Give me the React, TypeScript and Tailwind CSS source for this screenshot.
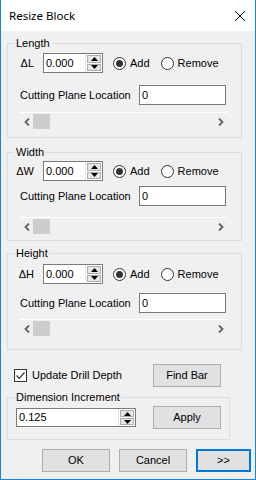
function UpDown() {
  return (
    <div className="flex h-full w-[17px] flex-col gap-px border-l border-[#e3e3e3] p-px">
      <div className="flex flex-1 items-center justify-center border border-[#adadad] bg-[#e6e6e6]">
        <svg width="7" height="4" viewBox="0 0 7 4">
          <path d="M3.5 0 7 4H0z" fill="#000" />
        </svg>
      </div>
      <div className="flex flex-1 items-center justify-center border border-[#adadad] bg-[#e6e6e6]">
        <svg width="7" height="4" viewBox="0 0 7 4">
          <path d="M0 0h7L3.5 4z" fill="#000" />
        </svg>
      </div>
    </div>
  );
}

function Radio({ checked, label }: { checked?: boolean; label: string }) {
  return (
    <div className="flex items-center">
      <span className="flex h-[13px] w-[13px] items-center justify-center rounded-full border border-[#333] bg-white">
        {checked && <span className="h-[7px] w-[7px] rounded-full bg-[#333]" />}
      </span>
      <span className="ml-[4px]">{label}</span>
    </div>
  );
}

function Chevron({ dir }: { dir: "l" | "r" }) {
  return (
    <svg width="6" height="8" viewBox="0 0 6 8">
      <path
        d={dir === "l" ? "M5 0.5 1.5 4 5 7.5" : "M1 0.5 4.5 4 1 7.5"}
        fill="none"
        stroke="#606060"
        strokeWidth="1.8"
      />
    </svg>
  );
}

interface GroupProps {
  label: string;
  delta: string;
  mt: string;
  r1: string;
  r2: string;
  r3: string;
  pb: string;
}

function ResizeGroup({ label, delta, mt, r1, r2, r3, pb }: GroupProps) {
  return (
    <div className={`ml-[6px] w-[235px] border border-[#dcdcdc] ${mt} ${pb}`}>
      <div className="-mt-[7px] ml-[6px] w-fit bg-[#f0f0f0] px-[2px] leading-[13px]">{label}</div>

      {/* delta row */}
      <div className={`flex h-[20px] items-center ${r1}`}>
        <div className="w-[26px] text-right">{delta}</div>
        <div className="ml-[9px] flex h-[20px] w-[60px] border border-[#7a7a7a] bg-white">
          <span className="flex-1 pl-[2px] leading-[18px]">0.000</span>
          <UpDown />
        </div>
        <div className="ml-[10px]">
          <Radio checked label="Add" />
        </div>
        <div className="ml-[11px]">
          <Radio label="Remove" />
        </div>
      </div>

      {/* cutting plane */}
      <div className={`flex h-[20px] items-center pl-[12px] ${r2}`}>
        <span className="w-[119px]">Cutting Plane Location</span>
        <div className="h-[20px] w-[87px] border border-[#7a7a7a] bg-white pl-[2px] leading-[18px]">0</div>
      </div>

      {/* scrollbar */}
      <div className={`ml-[12px] flex h-[18px] w-[207px] items-center border-t border-white ${r3}`}>
        <div className="flex w-[13px] justify-center">
          <Chevron dir="l" />
        </div>
        <div className="h-[15px] w-[17px] bg-[#cdcdcd]" />
        <div className="ml-auto flex w-[13px] justify-center">
          <Chevron dir="r" />
        </div>
      </div>
    </div>
  );
}

function Btn({ children, w, focus }: { children: React.ReactNode; w: string; focus?: boolean }) {
  return (
    <div
      className={`flex h-[23px] items-center justify-center bg-[#e1e1e1] ${w} ${
        focus ? "border-2 border-[#0078d7]" : "border border-[#adadad]"
      }`}
    >
      {children}
    </div>
  );
}

export default function App() {
  return (
    <div className="flex h-[480px] w-[256px] flex-col border-x border-b border-[#1883d7] bg-[#f0f0f0] font-['Liberation_Sans',Arial,sans-serif] text-[11px] text-black">
      {/* title bar */}
      <div className="flex h-[31px] shrink-0 items-center bg-white pl-[8px] pr-[10px]">
        <span className="font-['Noto_Sans',sans-serif] text-[11.5px]">Resize Block</span>
        <svg className="ml-auto" width="10" height="10" viewBox="0 0 10 10">
          <path d="M0 0 10 10M10 0 0 10" stroke="#000" strokeWidth="1" />
        </svg>
      </div>

      <ResizeGroup label="Length" delta="ΔL" mt="mt-[12px]" r1="mt-[3px]" r2="mt-[12px]" r3="mt-[7px]" pb="pb-[7px]" />
      <ResizeGroup label="Width" delta="ΔW" mt="mt-[14px]" r1="mt-[2px]" r2="mt-[5px]" r3="mt-[11px]" pb="pb-[5px]" />
      <ResizeGroup label="Height" delta="ΔH" mt="mt-[12px]" r1="mt-[4px]" r2="mt-[9px]" r3="mt-[6px]" pb="pb-[12px]" />

      {/* drill depth */}
      <div className="mt-[14px] flex items-center pl-[13px]">
        <span className="flex h-[13px] w-[13px] items-center justify-center border border-[#333] bg-white">
          <svg width="11" height="11" viewBox="0 0 11 11">
            <path d="M1.5 5.5 4.2 8.3 9.5 2.5" fill="none" stroke="#333" strokeWidth="1.2" />
          </svg>
        </span>
        <span className="ml-[5px]">Update Drill Depth</span>
        <div className="ml-auto mr-[34px]">
          <Btn w="w-[68px]">Find Bar</Btn>
        </div>
      </div>

      {/* dimension increment */}
      <div className="ml-[6px] mt-[10px] w-[223px] border border-[#dcdcdc] pb-[10px]">
        <div className="-mt-[7px] ml-[6px] w-fit bg-[#f0f0f0] px-[2px] leading-[13px]">Dimension Increment</div>
        <div className="mt-[2px] flex items-center pl-[8px]">
          <div className="flex h-[19px] w-[120px] border border-[#7a7a7a] bg-white">
            <span className="flex-1 pl-[2px] leading-[17px]">0.125</span>
            <UpDown />
          </div>
          <div className="ml-[17px]">
            <Btn w="w-[68px]">Apply</Btn>
          </div>
        </div>
      </div>

      {/* dialog buttons */}
      <div className="mt-[9px] flex gap-[9px] pl-[41px]">
        <Btn w="w-[68px]">OK</Btn>
        <Btn w="w-[68px]">Cancel</Btn>
        <Btn w="w-[55px]" focus>
          &gt;&gt;
        </Btn>
      </div>
    </div>
  );
}
